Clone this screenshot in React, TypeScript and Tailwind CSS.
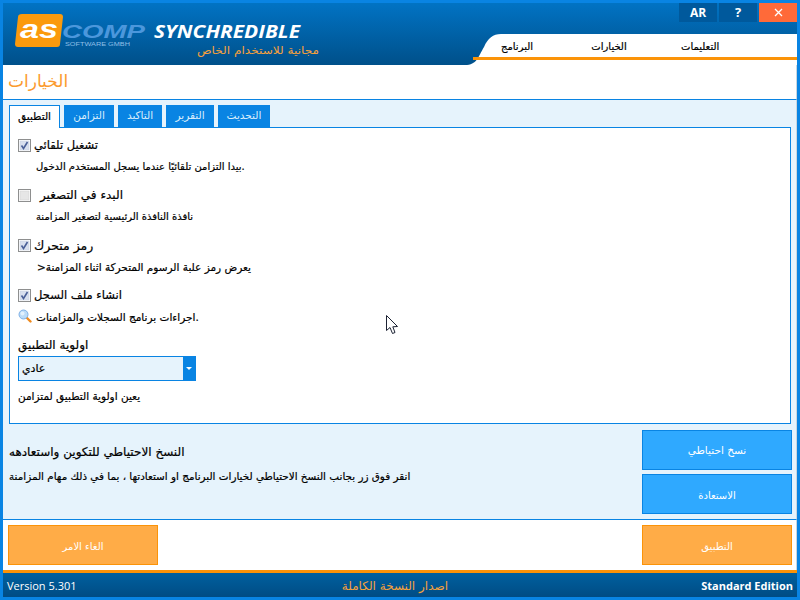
const arabic = "font-['DejaVu_Sans','Noto_Sans',sans-serif]";

const tabs = [
  { text: "التطبيق", width: "w-[51px]" },
  { text: "التزامن", width: "w-[50px]" },
  { text: "التاكيد", width: "w-[44px]" },
  { text: "التقرير", width: "w-[48px]" },
  { text: "التحديث", width: "w-[52px]" },
];

function CheckBox({ checked }: { checked: boolean }) {
  return (
    <svg width="13" height="13" viewBox="0 0 13 13" className="shrink-0">
      <rect x="0.5" y="0.5" width="12" height="12" fill="#fff" stroke="#8e8f8f" />
      <rect x="2" y="2" width="9" height="9" fill={checked ? "#d8dfee" : "#e6e6e6"} stroke={checked ? "#c3c9da" : "#cfcfcf"} strokeWidth="0.5" />
      {checked && <path d="M3.5 6.5 L5.5 9.5 L9.5 3" fill="none" stroke="#4a5f97" strokeWidth="1.6" />}
    </svg>
  );
}

function Option({ label, labelClass, checked, children, gap }: { label: string; labelClass: string; checked: boolean; children: React.ReactNode; gap?: string }) {
  return (
    <div className="h-[50px]">
      <div className={`flex h-[15px] items-center ${gap ?? "gap-[3px]"}`}>
        <CheckBox checked={checked} />
        <span className={`${labelClass} leading-[15px] text-black`}>{label}</span>
      </div>
      <div className="mt-[7px] flex h-[14px] items-center leading-[14px] text-black">{children}</div>
    </div>
  );
}

function BigButton({ text, orange, size }: { text: string; orange?: boolean; size?: string }) {
  return (
    <button
      className={`flex h-[40px] w-[150px] items-center justify-center border pt-[2px] ${size ?? "text-[10px]"} text-white ${
        orange ? "border-[#fb9308] bg-[#ffac47]" : "border-[#0984e3] bg-[#2fa9ff]"
      }`}
    >
      {text}
    </button>
  );
}

export default function App() {
  return (
    <div className={`flex h-[600px] w-[800px] flex-col overflow-hidden border-[3px] border-[#0984e3] bg-white ${arabic}`}>
      <header className="flex h-[62px] shrink-0 justify-between bg-gradient-to-b from-[#0173c4] to-[#00508a]">
        <svg width="320" height="62" viewBox="0 0 320 62" className="shrink-0">
          <path d="M19 11 h38 q3 0 3 3 l-3 27 q0 3 -3 3 h-39 q-3 0 -3 -3 l3 -27 q0 -3 4 -3z" fill="#fb9a0c" />
          <text x="17" y="35" textLength="38" lengthAdjust="spacingAndGlyphs" fontFamily="Liberation Sans" fontWeight="700" fontStyle="italic" fontSize="25" fill="#fff">as</text>
          <text x="59" y="35" textLength="83" lengthAdjust="spacingAndGlyphs" fontFamily="Liberation Sans" fontWeight="700" fontStyle="italic" fontSize="18" fill="#4b97dc">COMP</text>
          <text x="62" y="43" textLength="65" lengthAdjust="spacingAndGlyphs" fontFamily="Liberation Sans" fontSize="4.8" fill="#8fbfe6">SOFTWARE GMBH</text>
          <text x="151" y="35" textLength="146" lengthAdjust="spacingAndGlyphs" fontFamily="Open Sans" fontWeight="700" fontStyle="italic" fontSize="18" fill="#fff">SYNCHREDIBLE</text>
          <text x="194" y="51" textLength="122" lengthAdjust="spacingAndGlyphs" fontFamily="DejaVu Sans" fontSize="11" fill="#f7a13c">مجانية للاستخدام الخاص</text>
        </svg>
        <div className="flex w-[332px] flex-col">
          <div className="flex h-[31px] justify-end gap-[2px] font-['Open_Sans'] text-[12px] font-bold text-white">
            <div className="flex h-[19px] w-[38px] items-center justify-center bg-[#00599c]">AR</div>
            <div className="flex h-[19px] w-[38px] items-center justify-center bg-[#00599c] text-[13px]">?</div>
            <div className="flex h-[19px] w-[38px] items-center justify-center bg-[#ff6a39]">
              <svg width="9" height="9" viewBox="0 0 9 9">
                <path d="M1 1 L8 8 M8 1 L1 8" stroke="#fff" strokeWidth="1.3" />
              </svg>
            </div>
          </div>
          <div className="flex h-[31px]">
            <svg width="36" height="31" viewBox="0 0 36 31" className="shrink-0">
              <path d="M0 31 C12 31 13 23 19 13 C23 4 28 0 36 0 L36 31 Z" fill="#fff" />
              <path d="M8 24.5 H36" stroke="#fb9308" strokeWidth="3" />
            </svg>
            <div className="flex-1 bg-white">
              <nav className="flex h-[26px] items-center border-b-[3px] border-[#fb9308] pt-[2px] text-[10px] text-black [-webkit-text-stroke:0.2px]">
                <span className="w-[32px] text-center">البرنامج</span>
                <span className="ml-[58px] w-[36px] text-center">الخيارات</span>
                <span className="ml-[54px] w-[36px] text-center">التعليمات</span>
              </nav>
            </div>
          </div>
        </div>
      </header>

      <div className="flex h-[35px] shrink-0 items-center border-b border-r border-b-[#0984e3] border-r-[#c9d6e0] pb-[1px] pl-[5px]">
        <span className="text-[17px] leading-none text-[#fb9a2e]">الخيارات</span>
      </div>

      <main className="flex h-[420px] shrink-0 flex-col border-b border-r border-b-[#0984e3] border-r-[#c9d6e0] bg-[#e6f3fc] pt-[5px]">
        <div className="ml-[6px] flex h-[23px] gap-[4px] text-[10.5px]">
          {tabs.map((t, i) => (
            <div
              key={t.text}
              className={
                i === 0
                  ? `relative z-10 flex h-[23px] ${t.width} items-center justify-center border border-b-0 border-[#0984e3] bg-white text-black [-webkit-text-stroke:0.2px]`
                  : `flex h-[22px] ${t.width} items-center justify-center bg-[#0984e3] text-[#d9eefc]`
              }
            >
              {t.text}
            </div>
          ))}
        </div>
        <section className="mx-[6px] -mt-px h-[297px] w-[782px] border border-[#0984e3] bg-white pl-[8px] pt-[10px] [-webkit-text-stroke:0.2px]">
          <Option label="تشغيل تلقائي" labelClass="text-[11.5px]" checked>
            <span className="pl-[18px] text-[10px]">بيدا التزامن تلقائيًا عندما يسجل المستخدم الدخول.</span>
          </Option>
          <Option label="البدء في التصغير" labelClass="text-[12px]" checked={false} gap="gap-[9px]">
            <span className="pl-[18px] text-[10px]">نافذة النافذة الرئيسية لتصغير المزامنة</span>
          </Option>
          <Option label="رمز متحرك" labelClass="text-[12.5px]" checked>
            <span dir="rtl" className="ml-[19px] text-[10.5px]">يعرض رمز علبة الرسوم المتحركة اثناء المزامنة&lt;</span>
          </Option>
          <Option label="انشاء ملف السجل" labelClass="text-[11.5px]" checked>
            <span className="flex items-center gap-[4px] text-[10.5px]">
              <svg width="14" height="14" viewBox="0 0 14 14" className="-mt-[3px] shrink-0">
                <path d="M8.5 8.5 L12.5 12.5" stroke="#ef8a1e" strokeWidth="2.4" strokeLinecap="round" />
                <circle cx="5.5" cy="5.5" r="4.5" fill="#bcdcf8" stroke="#7fb0e6" />
                <circle cx="4.5" cy="4.5" r="2" fill="#e3f1fd" />
              </svg>
              <span>اجراءات برنامج السجلات والمزامنات.</span>
            </span>
          </Option>
          <div className="text-[12px] leading-[15px] text-black">اولوية التطبيق</div>
          <div className="mt-[3px] flex h-[25px] w-[178px] items-center justify-between border border-[#0984e3] bg-[#e6f3fc]">
            <span className="pl-[3px] pt-[2px] text-[11px] text-black">عادي</span>
            <div className="flex h-full w-[12px] items-center justify-center bg-[#0984e3]">
              <div className="h-0 w-0 border-x-[3px] border-t-[3px] border-x-transparent border-t-white" />
            </div>
          </div>
          <div className="mt-[8px] text-[10.5px] leading-[14px] text-black">يعين اولوية التطبيق لمتزامن</div>
        </section>
        <div className="flex flex-1 justify-between pl-[6px] pr-[4px] pt-[6px]">
          <div className="pt-[15px] [-webkit-text-stroke:0.2px]">
            <div className="text-[12px] leading-[14px] text-black">النسخ الاحتياطي للتكوين واستعادهه</div>
            <div className="mt-[10px] text-[10.4px] leading-[14px] text-black">انقر فوق زر بجانب النسخ الاحتياطي لخيارات البرنامج او استعادتها ، بما في ذلك مهام المزامنة</div>
          </div>
          <div className="flex flex-col gap-[4px]">
            <BigButton text="نسخ احتياطي" size="text-[10.5px]" />
            <BigButton text="الاستعادة" />
          </div>
        </div>
      </main>

      <div className="flex h-[50px] shrink-0 items-start justify-between border-r border-[#c9d6e0] pl-[5px] pr-[4px] pt-[5px]">
        <BigButton text="الغاء الامر" orange />
        <BigButton text="التطبيق" orange />
      </div>

      <footer className="flex h-[27px] shrink-0 items-center justify-between border-t-[3px] border-[#fb9308] bg-gradient-to-b from-[#00609f] to-[#004c84] pl-[4px] pr-[4px] pt-[2px] font-['Open_Sans'] text-[11px] text-white">
        <span>Version 5.301</span>
        <span className={`${arabic} ml-[12px] text-[12px] text-[#f7a13c]`}>اصدار النسخة الكاملة</span>
        <span className="font-bold">Standard Edition</span>
      </footer>

      <svg width="14" height="20" viewBox="0 0 14 20" className="pointer-events-none absolute left-[386px] top-[315px]">
        <path d="M0.5 0.5 V15.5 L4 12.5 L6.5 18.5 L9 17.5 L6.8 11.8 L11.5 11.5 Z" fill="#fff" stroke="#1c2233" />
      </svg>
    </div>
  );
}
